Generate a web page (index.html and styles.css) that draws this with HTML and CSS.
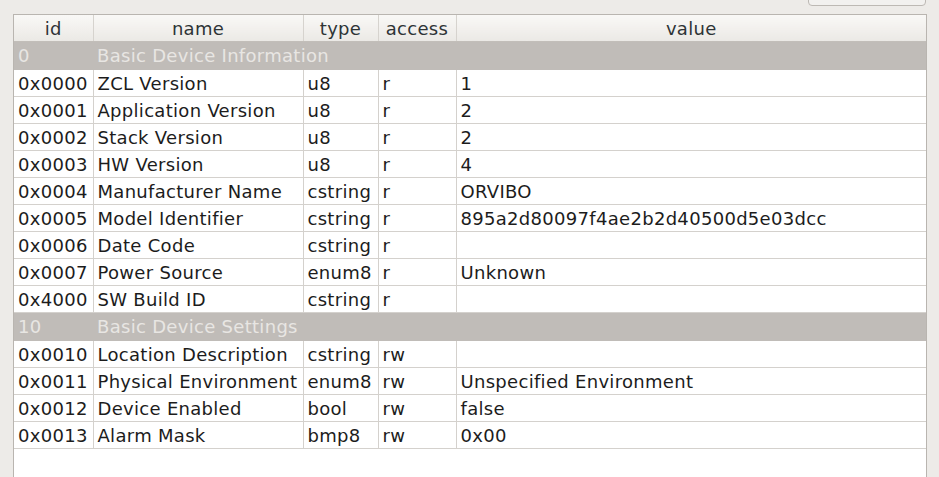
FILE: index.html
```html
<!DOCTYPE html>
<html>
<head>
<meta charset="utf-8">
<link rel="stylesheet" href="styles.css">
</head>
<body>
<div class="topbar"><div class="btn"></div></div>
<div class="panel">
<table class="attrs">
<colgroup><col class="c-id"><col class="c-name"><col class="c-type"><col class="c-access"><col class="c-value"></colgroup>
<thead>
<tr><th>id</th><th>name</th><th>type</th><th>access</th><th>value</th></tr>
</thead>
<tbody>
<tr class="group"><td>0</td><td colspan="4">Basic Device Information</td></tr>
<tr><td>0x0000</td><td>ZCL Version</td><td>u8</td><td>r</td><td>1</td></tr>
<tr><td>0x0001</td><td>Application Version</td><td>u8</td><td>r</td><td>2</td></tr>
<tr><td>0x0002</td><td>Stack Version</td><td>u8</td><td>r</td><td>2</td></tr>
<tr><td>0x0003</td><td>HW Version</td><td>u8</td><td>r</td><td>4</td></tr>
<tr><td>0x0004</td><td>Manufacturer Name</td><td>cstring</td><td>r</td><td>ORVIBO</td></tr>
<tr><td>0x0005</td><td>Model Identifier</td><td>cstring</td><td>r</td><td>895a2d80097f4ae2b2d40500d5e03dcc</td></tr>
<tr><td>0x0006</td><td>Date Code</td><td>cstring</td><td>r</td><td></td></tr>
<tr><td>0x0007</td><td>Power Source</td><td>enum8</td><td>r</td><td>Unknown</td></tr>
<tr><td>0x4000</td><td>SW Build ID</td><td>cstring</td><td>r</td><td></td></tr>
<tr class="group"><td>10</td><td colspan="4">Basic Device Settings</td></tr>
<tr><td>0x0010</td><td>Location Description</td><td>cstring</td><td>rw</td><td></td></tr>
<tr><td>0x0011</td><td>Physical Environment</td><td>enum8</td><td>rw</td><td>Unspecified Environment</td></tr>
<tr><td>0x0012</td><td>Device Enabled</td><td>bool</td><td>rw</td><td>false</td></tr>
<tr><td>0x0013</td><td>Alarm Mask</td><td>bmp8</td><td>rw</td><td>0x00</td></tr>
</tbody>
</table>
</div>
</body>
</html>
```

FILE: styles.css
```css
html, body {
  margin: 0;
  padding: 0;
  background: #edebe8;
  font-family: "DejaVu Sans", "Liberation Sans", sans-serif;
  font-size: 18px;
  letter-spacing: 0.3px;
  color: #1c1c1c;
  overflow: hidden;
  height: 477px;
}

.topbar {
  height: 14px;
  position: relative;
}

.btn {
  position: absolute;
  left: 808px;
  top: -6px;
  width: 116px;
  height: 10px;
  border: 1px solid #bdb9b4;
  border-radius: 4px;
  background: #f2f1ef;
}

.panel {
  margin-left: 13px;
  width: 912px;
  height: 480px;
  background: #ffffff;
  border: 1px solid #b9b5b0;
  border-bottom: none;
}

.attrs {
  border-collapse: collapse;
  table-layout: fixed;
  width: 912px;
}

.c-id { width: 79px; }
.c-name { width: 210px; }
.c-type { width: 75px; }
.c-access { width: 78px; }
.c-value { width: 470px; }

.attrs th {
  height: 26px;
  padding: 0;
  font-weight: normal;
  color: #2e3436;
  background: linear-gradient(#f9f8f6, #ebe9e5);
  border-right: 1px solid #d6d3ce;
  border-bottom: 1px solid #c2beb9;
  text-align: center;
  white-space: nowrap;
}

.attrs th:last-child {
  border-right: none;
}

.attrs td {
  height: 26px;
  padding: 0 0 0 4px;
  white-space: nowrap;
  overflow: hidden;
  border-right: 1px solid #d4d1cd;
  border-bottom: 1px solid #d4d1cd;
  vertical-align: middle;
}

.attrs td:last-child {
  border-right: none;
}

.attrs tr.group td {
  height: 27px;
  background: #c0bcb8;
  color: #e8e6e3;
  border-right: none;
  border-bottom: 1px solid #c0bcb8;
}
```
